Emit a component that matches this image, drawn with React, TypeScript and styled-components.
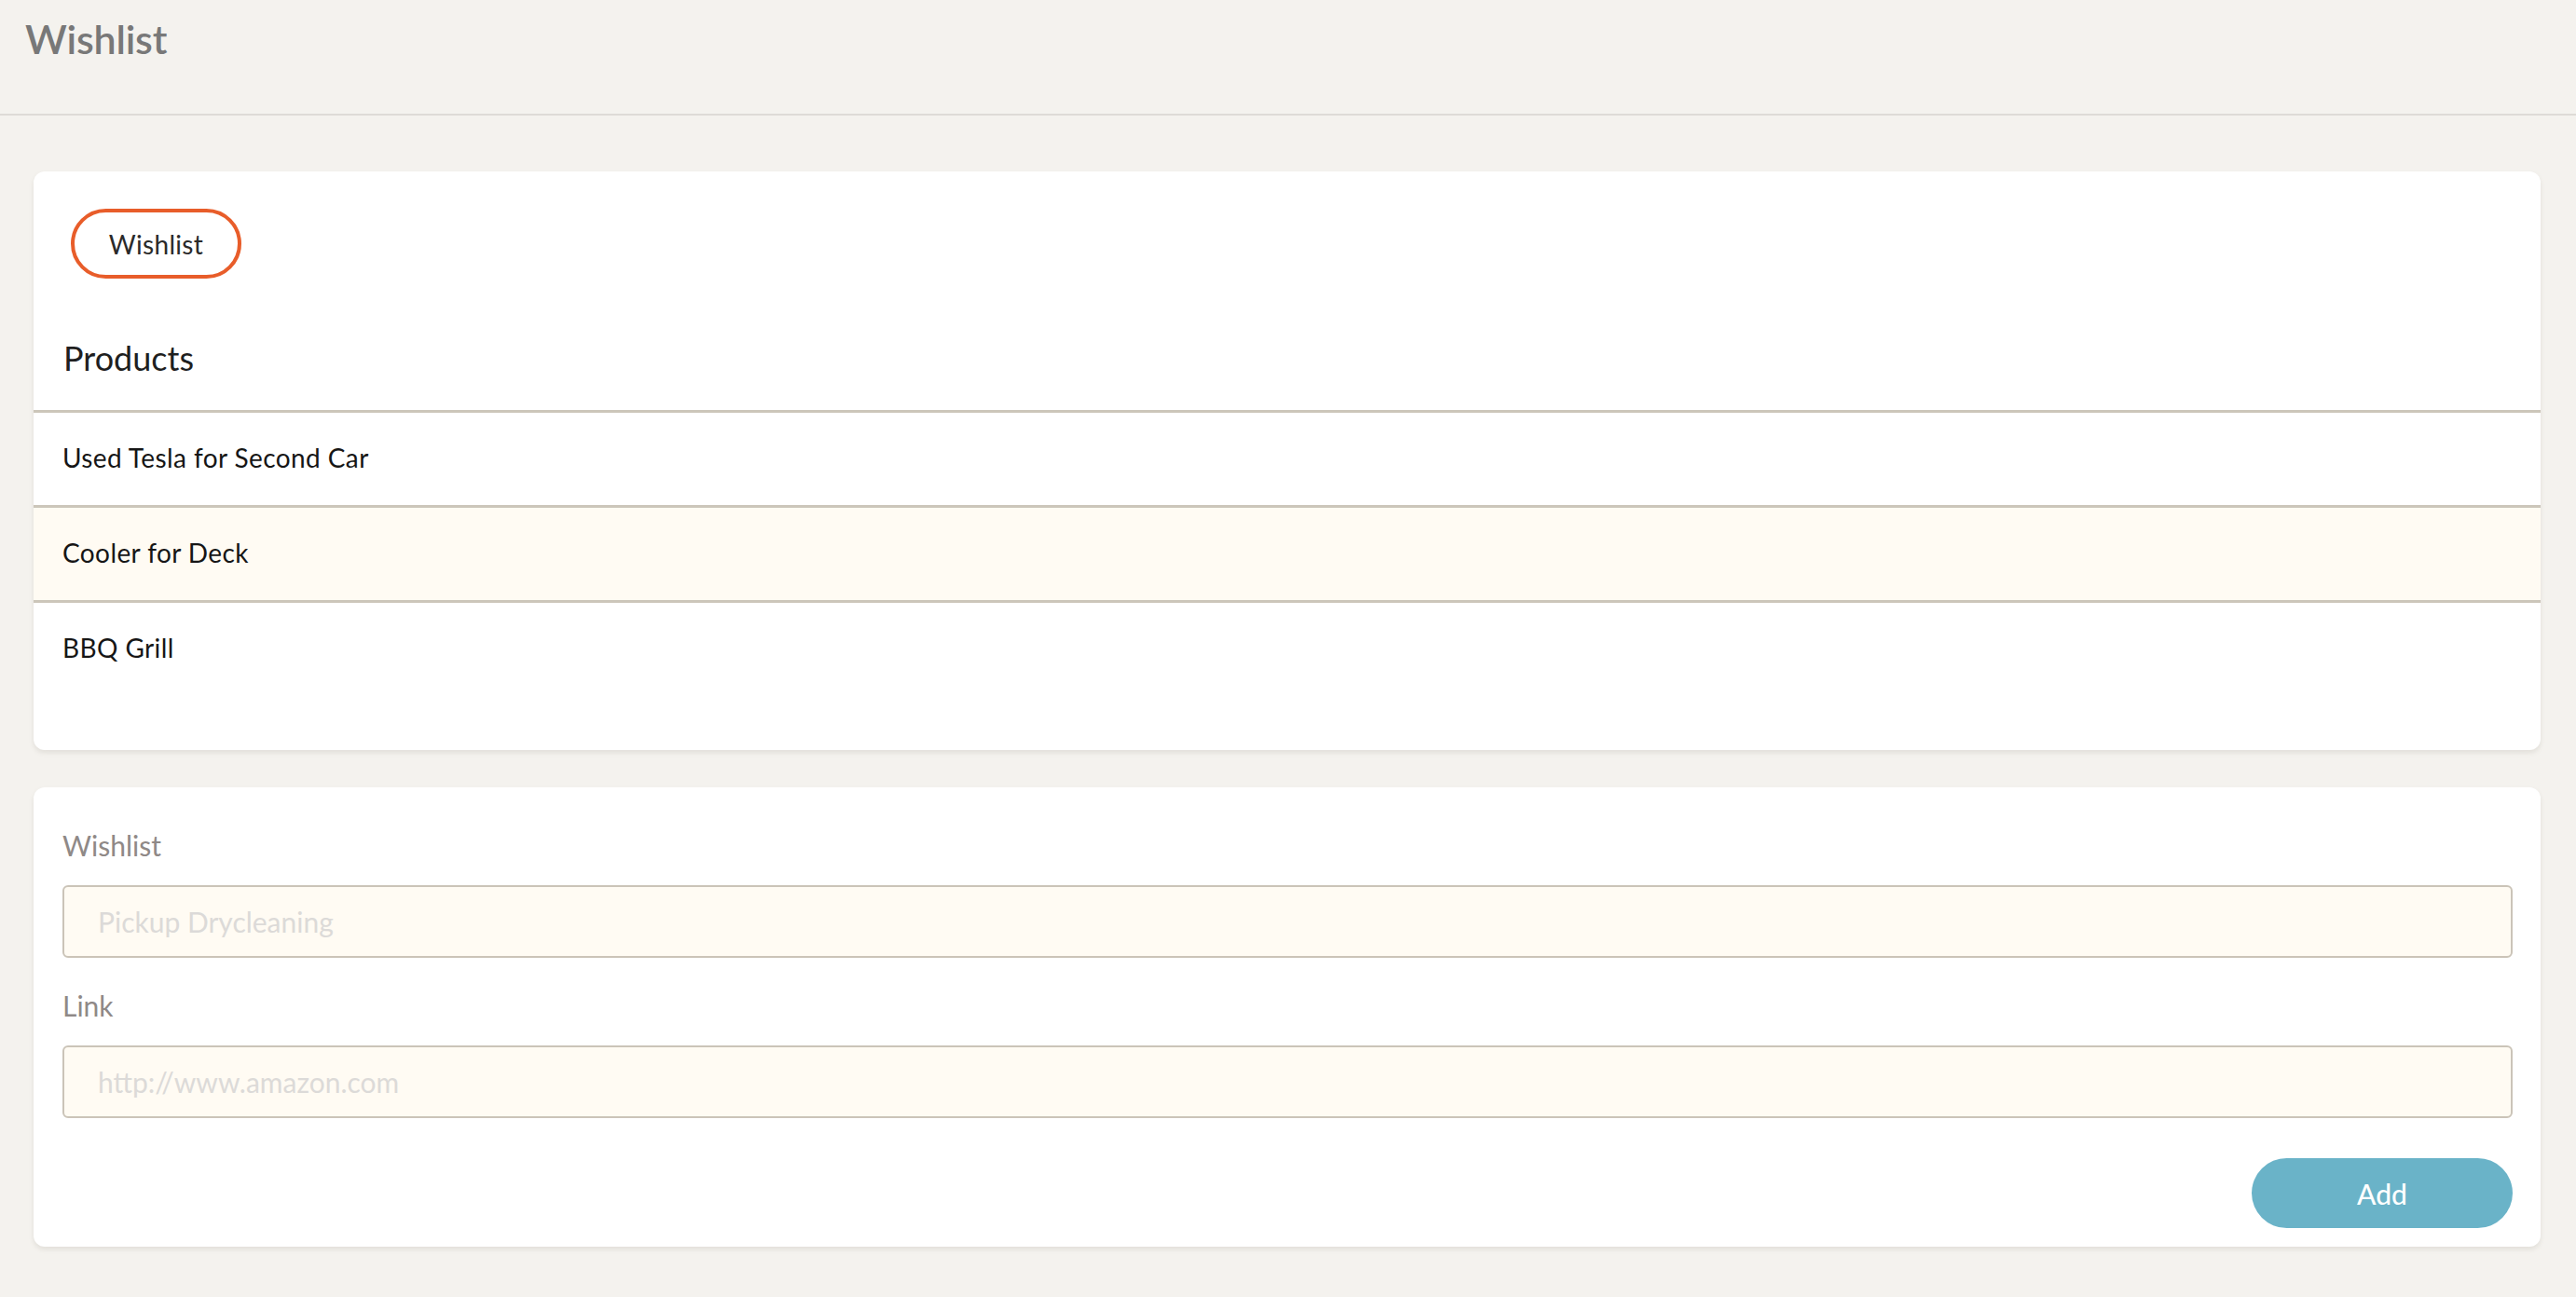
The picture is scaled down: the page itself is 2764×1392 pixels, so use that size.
import React from "react";
import styled, { createGlobalStyle } from "styled-components";

const FONT = `"Lato", "Noto Sans", sans-serif`;

const Global = createGlobalStyle`
  html, body { margin: 0; padding: 0; }
  body {
    background: #f4f2ee;
    font-family: ${FONT};
    -webkit-font-smoothing: antialiased;
  }
  * { box-sizing: border-box; }
`;

const Header = styled.header`
  height: 124px;
  padding: 20px 27px 0;
  border-bottom: 2px solid #dedbd7;
`;

const Title = styled.h1`
  margin: 0;
  font-size: 43px;
  line-height: 44px;
  font-weight: 600;
  letter-spacing: -0.2px;
  color: #787878;
`;

const Main = styled.main`
  display: flex;
  flex-direction: column;
  gap: 40px;
  padding: 60px 38px 40px 36px;
`;

const Card = styled.section<{ $pad: string }>`
  background: #ffffff;
  border-radius: 12px;
  box-shadow: 0 3px 5px rgba(120, 110, 100, 0.14);
  padding: ${(p) => p.$pad};
`;

const Pill = styled.div`
  width: 183px;
  height: 75px;
  margin-left: 40px;
  border: 4px solid #e85d2a;
  border-radius: 38px;
  display: flex;
  align-items: center;
  justify-content: center;
  font-size: 28px;
  letter-spacing: 0.3px;
  color: #2a2a2a;
`;

const SectionHeading = styled.h2`
  margin: 0;
  height: 141px;
  display: flex;
  align-items: flex-end;
  padding: 0 0 38px 32px;
  font-size: 36px;
  line-height: 36px;
  font-weight: 400;
  color: #1f1f1f;
`;

const List = styled.ul`
  list-style: none;
  margin: 0;
  padding: 0;
`;

const Row = styled.li<{ $alt?: boolean }>`
  height: 102px;
  border-top: 3px solid #ccc6ba;
  background: ${(p) => (p.$alt ? "#fffbf3" : "#ffffff")};
  display: flex;
  align-items: center;
  padding: 0 31px 4px;
  font-size: 28px;
  letter-spacing: 0.4px;
  color: #161616;
`;

const Label = styled.label`
  display: block;
  font-size: 30px;
  line-height: 30px;
  color: #8f8987;
  margin-bottom: 28px;
`;

const Field = styled.div<{ $first?: boolean }>`
  margin-top: ${(p) => (p.$first ? "0" : "36px")};
`;

const Input = styled.input`
  display: block;
  width: 100%;
  height: 78px;
  border: 2px solid #cbc4b8;
  border-radius: 6px;
  background: #fffbf3;
  padding: 0 36px;
  font-family: ${FONT};
  font-size: 30px;
  color: #333;
  outline: none;
  &::placeholder {
    color: #dcdad8;
  }
`;

const Actions = styled.div`
  display: flex;
  justify-content: flex-end;
  margin-top: 43px;
`;

const Button = styled.button`
  width: 280px;
  height: 75px;
  border: none;
  border-radius: 38px;
  background: #6ab3c8;
  color: #ffffff;
  font-family: ${FONT};
  font-size: 30px;
  font-weight: 500;
  cursor: pointer;
`;

const products = ["Used Tesla for Second Car", "Cooler for Deck", "BBQ Grill"];

export default function App() {
  return (
    <>
      <Global />
      <Header>
        <Title>Wishlist</Title>
      </Header>
      <Main>
        <Card $pad="40px 0 59px">
          <Pill>Wishlist</Pill>
          <SectionHeading>Products</SectionHeading>
          <List>
            {products.map((p, i) => (
              <Row key={p} $alt={i === 1}>
                {p}
              </Row>
            ))}
          </List>
        </Card>
        <Card $pad="47px 30px 20px 31px">
          <Field $first>
            <Label>Wishlist</Label>
            <Input placeholder="Pickup Drycleaning" />
          </Field>
          <Field>
            <Label>Link</Label>
            <Input placeholder="http://www.amazon.com" />
          </Field>
          <Actions>
            <Button>Add</Button>
          </Actions>
        </Card>
      </Main>
    </>
  );
}
